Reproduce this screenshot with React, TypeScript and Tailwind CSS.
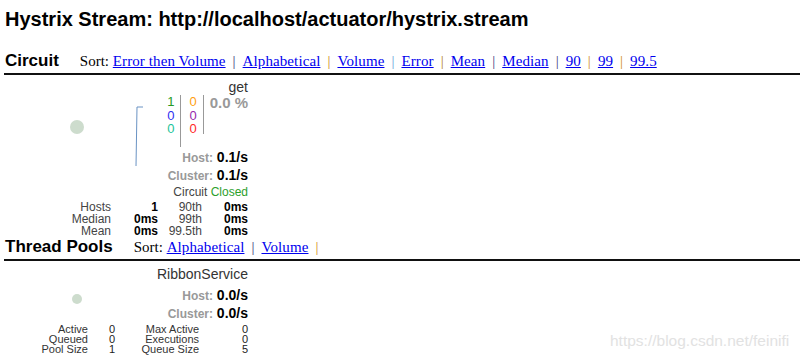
import React from "react";

type SortLink = { label: string; sep?: string };

const CIRCUIT_SORT: SortLink[] = [
  { label: "Error then Volume", sep: "#3b2f7a" },
  { label: "Alphabetical", sep: "#c98a1a" },
  { label: "Volume", sep: "#6a9fd8" },
  { label: "Error", sep: "#b07a20" },
  { label: "Mean", sep: "#3b3b7a" },
  { label: "Median", sep: "#3b3b7a" },
  { label: "90", sep: "#d08c1c" },
  { label: "99", sep: "#d08c1c" },
  { label: "99.5" },
];

const POOL_SORT: SortLink[] = [
  { label: "Alphabetical", sep: "#3b2f7a" },
  { label: "Volume", sep: "#d08c1c" },
];

function SectionHeader({ title, links, className }: { title: string; links: SortLink[]; className?: string }) {
  return (
    <div className={`pl-[5px] ${className ?? ""}`}>
      <div className="flex h-[20px] items-baseline gap-[21px]">
        <span className="text-[17px] font-bold leading-[20px] text-black">{title}</span>
        <span className="font-['Liberation_Serif','Times_New_Roman',serif] text-[15px] leading-[20px] text-black">
          Sort:{" "}
          {links.map((l) => (
            <React.Fragment key={l.label}>
              <a href="#" className="tracking-[0.1px] text-[#0000ee] underline">
                {l.label}
              </a>
              {l.sep && (
                <span className="mx-[7px]" style={{ color: l.sep }}>
                  |
                </span>
              )}
            </React.Fragment>
          ))}
        </span>
      </div>
      <div className="ml-[-1px] mt-[2px] h-[2px] bg-[#111]" />
    </div>
  );
}

function Rate({ label, value }: { label: string; value: string }) {
  return (
    <div className="text-right text-[14px] leading-[17px]">
      <span className="text-[12px] font-bold text-[#999]">{label}</span>{" "}
      <span className="font-bold text-black">{value}</span>
    </div>
  );
}

function CircuitMonitor() {
  const stats = [
    ["Hosts", "1", "90th", "0ms"],
    ["Median", "0ms", "99th", "0ms"],
    ["Mean", "0ms", "99.5th", "0ms"],
  ];
  return (
    <div className="relative w-[250px] pr-[2px] pt-[4px]">
      <svg className="absolute left-0 top-0" width="160" height="120">
        <circle cx="77" cy="52" r="7" fill="#cddccd" />
        <path d="M143 32 L137 32 L136 91" stroke="#6a93c4" strokeWidth="1" fill="none" />
      </svg>
      <div className="relative text-right text-[14px] leading-[16px] text-[#333]">get</div>
      <div className="relative flex h-[52px] justify-end">
        <div className="h-[52px] border-r border-[#999] pr-[6px] text-right text-[13px] leading-[13.5px]">
          <div className="text-[#259a25]">1</div>
          <div className="text-[#2f2ff0]">0</div>
          <div className="text-[#1cc49a]">0</div>
        </div>
        <div className="h-[39px] border-r border-[#999] pl-[8px] pr-[6px] text-right text-[13px] leading-[13.5px]">
          <div className="text-[#ffa010]">0</div>
          <div className="text-[#9628ac]">0</div>
          <div className="text-[#ff2828]">0</div>
        </div>
        <div className="pl-[6px] text-[15px] font-bold leading-[16px] text-[#999]">0.0 %</div>
      </div>
      <div className="mt-[2px]">
        <Rate label="Host:" value="0.1/s" />
        <Rate label="Cluster:" value="0.1/s" />
      </div>
      <div className="text-right text-[12px] leading-[14px] text-[#444]">
        Circuit <span className="text-[#2ca02c]">Closed</span>
      </div>
      <div className="mt-[2px] grid grid-cols-[111px_47px_44px_46px] text-right text-[12px] leading-[12px]">
        {stats.map((r) => (
          <React.Fragment key={r[0]}>
            <div className="text-[#444]">{r[0]}</div>
            <div className="font-bold text-black">{r[1]}</div>
            <div className="text-[#444]">{r[2]}</div>
            <div className="font-bold text-black">{r[3]}</div>
          </React.Fragment>
        ))}
      </div>
    </div>
  );
}

function PoolMonitor() {
  const stats = [
    ["Active", "0", "Max Active", "0"],
    ["Queued", "0", "Executions", "0"],
    ["Pool Size", "1", "Queue Size", "5"],
  ];
  return (
    <div className="relative w-[250px] pr-[2px] pt-[5px]">
      <svg className="absolute left-0 top-0" width="160" height="60">
        <circle cx="77" cy="38" r="5" fill="#cddccd" />
      </svg>
      <div className="relative text-right text-[14px] leading-[16px] text-[#333]">RibbonService</div>
      <div className="relative mt-[5px]">
        <Rate label="Host:" value="0.0/s" />
        <Rate label="Cluster:" value="0.0/s" />
      </div>
      <div className="mt-[1px] grid grid-cols-[88px_27px_84px_49px] text-right text-[11px] leading-[10px] text-[#333]">
        {stats.map((r) => (
          <React.Fragment key={r[0]}>
            <div>{r[0]}</div>
            <div className="text-[#222]">{r[1]}</div>
            <div>{r[2]}</div>
            <div className="text-[#222]">{r[3]}</div>
          </React.Fragment>
        ))}
      </div>
    </div>
  );
}

export default function App() {
  return (
    <div className="relative h-[360px] w-[800px] overflow-hidden bg-white font-['Liberation_Sans',Arial,sans-serif]">
      <h1 className="pl-[5px] pt-[8px] text-[20px] font-bold leading-[22px] text-black">
        Hystrix Stream: http://localhost/actuator/hystrix.stream
      </h1>
      <SectionHeader title="Circuit" links={CIRCUIT_SORT} className="mt-[21px]" />
      <CircuitMonitor />
      <SectionHeader title="Thread Pools" links={POOL_SORT} />
      <PoolMonitor />
      <div className="absolute left-[610px] top-[332px] text-[15.5px] leading-[18px] text-[#e2e2e2]">
        https://blog.csdn.net/feinifi
      </div>
    </div>
  );
}
